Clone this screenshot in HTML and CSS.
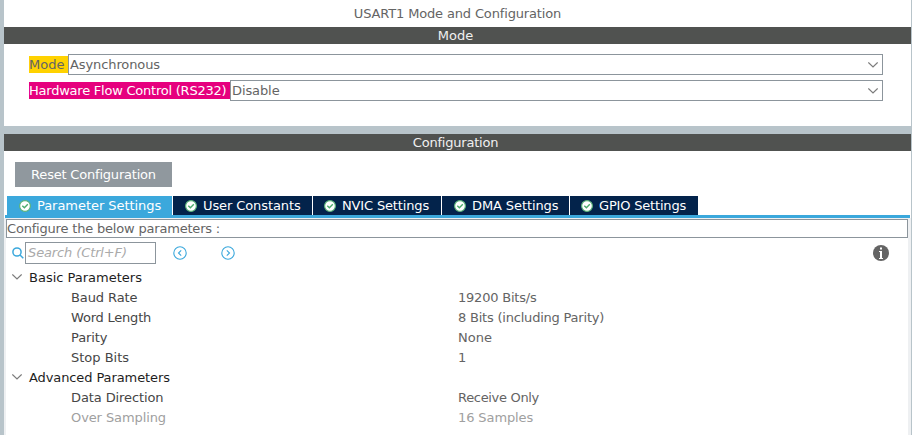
FILE: index.html
```html
<!DOCTYPE html>
<html lang="en">
<head>
<meta charset="utf-8">
<title>USART1 Mode and Configuration</title>
<link rel="stylesheet" href="styles.css">
</head>
<body>
<svg class="defs" width="0" height="0">
  <symbol id="check" viewBox="0 0 12 12"><circle cx="6" cy="6" r="5.4" fill="#fff" stroke="#5cb47a" stroke-width="1.2"/><path d="M3.300 5.700 5.400 7.800 8.800 4.300" fill="none" stroke="#4cab6c" stroke-width="1.4"/></symbol>
  <symbol id="chevron" viewBox="0 0 10 6"><path d="M.3.5 5 4.900 9.700.5" fill="none" stroke="#7c7c7c" stroke-width="1.3"/></symbol>
</svg>
<section class="panel mode-panel">
  <h1 class="title">USART1 Mode and Configuration</h1>
  <h2 class="bar">Mode</h2>
  <div class="fields">
    <div class="field"><label class="label yellow">Mode</label><div class="select snug">Asynchronous<svg class="chevron"><use href="#chevron"/></svg></div></div>
    <div class="field"><label class="label pink">Hardware Flow Control (RS232)</label><div class="select snug">Disable<svg class="chevron"><use href="#chevron"/></svg></div></div>
  </div>
</section>
<section class="panel config-panel">
  <h2 class="bar tight">Configuration</h2>
  <button class="reset">Reset Configuration</button>
  <nav class="tabs">
    <div class="tab active"><svg class="check"><use href="#check"/></svg>Parameter Settings</div>
    <div class="tab user"><svg class="check"><use href="#check"/></svg>User Constants</div>
    <div class="tab nvic"><svg class="check"><use href="#check"/></svg>NVIC Settings</div>
    <div class="tab dma"><svg class="check"><use href="#check"/></svg>DMA Settings</div>
    <div class="tab gpio"><svg class="check"><use href="#check"/></svg>GPIO Settings</div>
  </nav>
  <div class="content">
    <div class="hint">Configure the below parameters :</div>
    <div class="toolbar">
      <svg class="magnifier" viewBox="0 0 12 12"><circle cx="5" cy="5" r="4.100"/><path d="M8 8 11.300 11.300"/></svg>
      <div class="search">Search (Ctrl+F)</div>
      <svg class="round prev" viewBox="0 0 14 14"><circle cx="7" cy="7" r="6.200"/><path d="M8.200 4.300 5.500 7 8.200 9.700"/></svg>
      <svg class="round next" viewBox="0 0 14 14"><circle cx="7" cy="7" r="6.200"/><path d="M5.800 4.300 8.500 7 5.800 9.700"/></svg>
      <svg class="info" viewBox="0 0 16 16"><circle cx="8" cy="8" r="8" fill="#646464"/><path d="M7 2.500h2v2H7zM6 6h3v7h1v1H6v-1h1V7H6z" fill="#fff"/></svg>
    </div>
    <div class="group"><svg class="chevron"><use href="#chevron"/></svg>Basic Parameters</div>
    <div class="row"><span class="snug">Baud Rate</span><span class="value tight">19200 Bits/s</span></div>
    <div class="row"><span class="tight">Word Length</span><span class="value tight">8 Bits (including Parity)</span></div>
    <div class="row"><span class="snug">Parity</span><span class="value">None</span></div>
    <div class="row"><span>Stop Bits</span><span class="value">1</span></div>
    <div class="group snug"><svg class="chevron"><use href="#chevron"/></svg>Advanced Parameters</div>
    <div class="row"><span class="snug">Data Direction</span><span class="value tighter">Receive Only</span></div>
    <div class="row disabled"><span class="snug">Over Sampling</span><span class="value snug">16 Samples</span></div>
  </div>
</section>
</body>
</html>
```
FILE: styles.css
```css
* { box-sizing: border-box; }
body {
  margin: 0;
  padding: 0 1px 0 4px;
  height: 435px;
  overflow: hidden;
  background: #b8c4ca;
  color: #646464;
  font: 13px/17px "DejaVu Sans", sans-serif;
  display: flex;
  flex-direction: column;
  gap: 8px;
}
svg { display: block; flex: none; }
.defs { position: absolute; }
.panel { background: #fff; }
.mode-panel { height: 126px; flex: none; }
.config-panel { flex: 1; display: flex; flex-direction: column; }
.title { margin: 0; height: 27px; padding-top: 5px; font-size: 13px; font-weight: normal; letter-spacing: -.15px; text-align: center; }
.bar { margin: 0; height: 17px; padding-right: 4px; flex: none; background: #505250; color: #f0f0f0; font-size: 13px; font-weight: normal; text-align: center; }
.fields { display: flex; flex-direction: column; gap: 5px; padding: 10px 28px 0 25px; }
.field { display: flex; align-items: center; height: 21px; }
.label { height: 17px; white-space: nowrap; }
.yellow { width: 39px; background: #ffd200; }
.pink { width: 201px; background: #e6007e; color: #fff; letter-spacing: -.23px; }
.select { flex: 1; height: 21px; border: 1px solid #8c959c; padding: 0 4px 0 1px; display: flex; align-items: center; justify-content: space-between; }
.chevron { width: 10px; height: 6px; }
.reset { width: 157px; height: 25px; flex: none; margin: 11px 0 0 11px; padding: 0; border: 0; background: #90989e; color: #fff; font: inherit; letter-spacing: -.2px; }
.tabs { margin: 9px 1px 0; padding-left: 2px; display: flex; gap: 1px; flex: none; border-bottom: 3px solid #3ba8dc; }
.tab { height: 19px; padding-left: 12px; display: flex; align-items: center; gap: 6px; background: #03234b; color: #fff; white-space: nowrap; letter-spacing: -.1px; }
.active { width: 165px; background: #3ba8dc; letter-spacing: -.05px; }
.user { width: 139px; }
.nvic { width: 128px; padding-left: 11px; letter-spacing: -.15px; }
.dma { width: 127px; }
.gpio { width: 128px; padding-left: 11px; letter-spacing: -.18px; }
.check { width: 12px; height: 12px; }
.content { flex: 1; border: solid #eef0f2; border-width: 1px 3px 0 2px; background: #fff; }
.hint { height: 19px; border: 1px solid #8c959c; line-height: 17px; letter-spacing: -.19px; }
.toolbar { display: flex; align-items: center; height: 22px; margin: 4px 0 3px; padding: 0 19px 0 6px; }
.magnifier { width: 12px; height: 12px; fill: none; stroke: #3ba8dc; stroke-width: 1.5; }
.search { width: 131px; height: 22px; margin-left: 1px; padding-left: 2px; border: 1px solid #8c959c; color: #aaa; font-style: italic; line-height: 20px; letter-spacing: -.12px; }
.round { width: 14px; height: 14px; fill: none; stroke: #3ba8dc; stroke-width: 1.1; }
.prev { margin-left: 17px; }
.next { margin-left: 34px; }
.info { width: 16px; height: 16px; margin-left: auto; }
.group { height: 20px; display: flex; align-items: center; gap: 7px; padding-left: 6px; color: #1e1e1e; }
.row { height: 20px; display: grid; grid-template-columns: 387px 1fr; align-items: center; padding-left: 65px; color: #464646; }
.value { color: #646464; }
.disabled, .disabled .value { color: #a0a0a0; }
.snug { letter-spacing: -.1px; }
.tight { letter-spacing: -.21px; }
.tighter { letter-spacing: -.32px; }
```
